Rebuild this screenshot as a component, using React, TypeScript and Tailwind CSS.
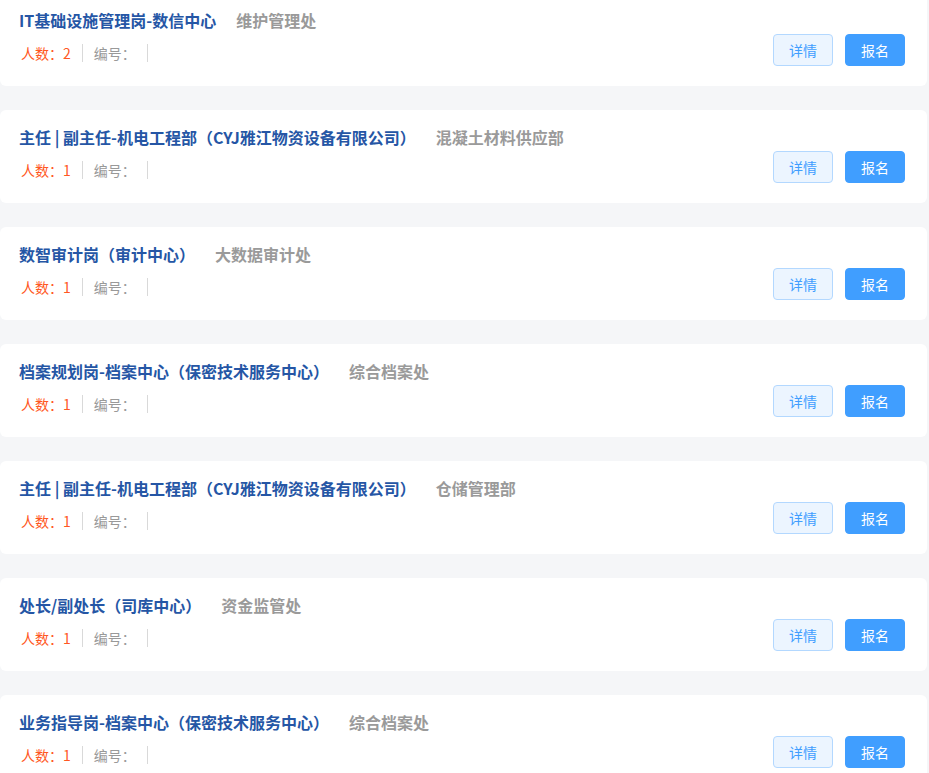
import React from 'react';

type Post = {
  title: string;
  dept: string;
  count: number;
  code?: string;
};

const posts: Post[] = [
  { title: 'IT基础设施管理岗-数信中心', dept: '维护管理处', count: 2 },
  { title: '主任 | 副主任-机电工程部（CYJ雅江物资设备有限公司）', dept: '混凝土材料供应部', count: 1 },
  { title: '数智审计岗（审计中心）', dept: '大数据审计处', count: 1 },
  { title: '档案规划岗-档案中心（保密技术服务中心）', dept: '综合档案处', count: 1 },
  { title: '主任 | 副主任-机电工程部（CYJ雅江物资设备有限公司）', dept: '仓储管理部', count: 1 },
  { title: '处长/副处长（司库中心）', dept: '资金监管处', count: 1 },
  { title: '业务指导岗-档案中心（保密技术服务中心）', dept: '综合档案处', count: 1 },
];

function PostCard({ post }: { post: Post }) {
  return (
    <div className="flex h-[93px] w-[927px] shrink-0 justify-between rounded-md bg-white pl-[19px] pr-[22px]">
      {/* Left: title + meta */}
      <div className="min-w-0 pt-[15px]">
        <div className="flex h-6 items-center text-base font-bold leading-6">
          <span className="text-[#2556a5]">{post.title}</span>
          <span className="ml-5 text-[#9a9a9a]">{post.dept}</span>
        </div>
        <div className="mt-3 flex h-[18px] items-center pl-[2px] text-sm leading-[18px]">
          <span className="border-r border-[#d9d9d9] pr-[11px] text-[#ff5722]">人数：{post.count}</span>
          <span className="border-r border-[#d9d9d9] px-[11px] text-[#999]">编号：{post.code ?? ''}</span>
        </div>
      </div>

      {/* Right: actions */}
      <div className="mb-5 flex items-end gap-3">
        <button className="h-8 w-[60px] rounded border border-[#b3d8ff] bg-[#ecf5ff] text-sm text-[#409eff]">
          详情
        </button>
        <button className="h-8 w-[60px] rounded border border-[#409eff] bg-[#409eff] text-sm text-white">
          报名
        </button>
      </div>
    </div>
  );
}

export default function App() {
  return (
    <div
      className="h-[773px] overflow-hidden bg-[#f5f6f8]"
      style={{ fontFamily: '"Noto Sans CJK SC", "Noto Sans", sans-serif' }}
    >
      <div className="-mt-[7px] flex flex-col gap-6">
        {posts.map((p, i) => (
          <PostCard key={i} post={p} />
        ))}
      </div>
    </div>
  );
}
